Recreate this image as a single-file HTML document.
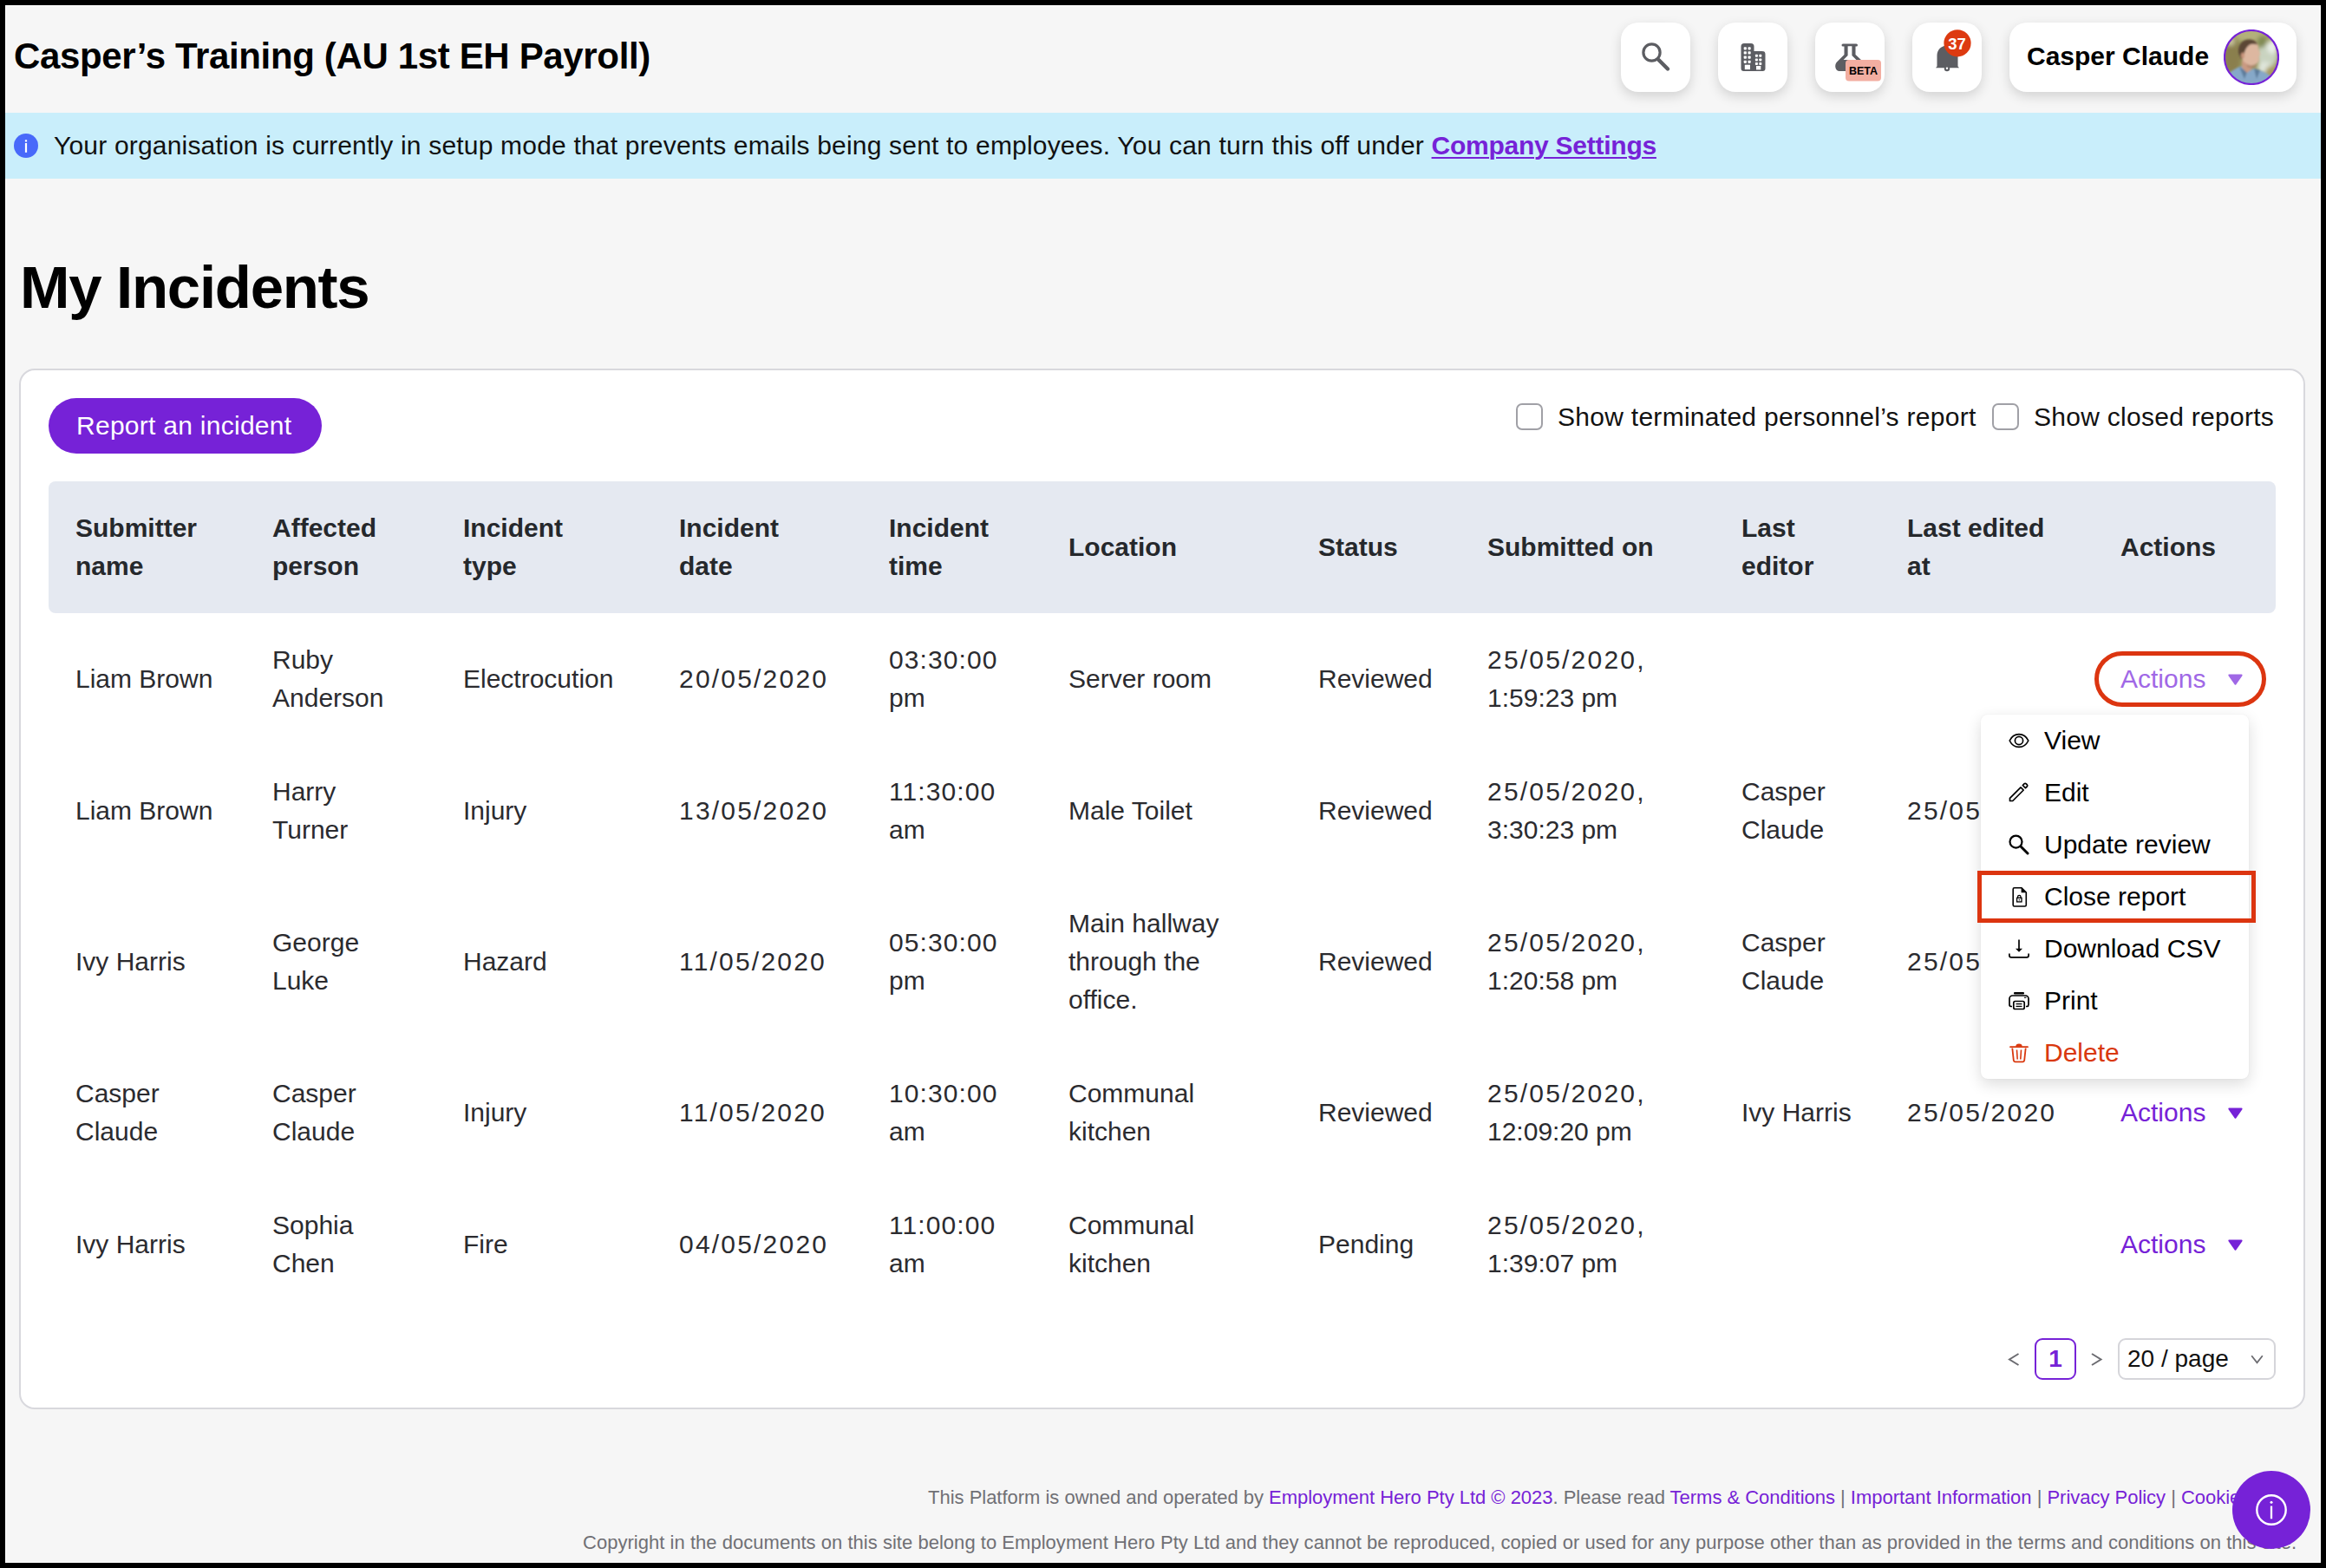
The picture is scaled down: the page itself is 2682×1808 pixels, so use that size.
<!DOCTYPE html>
<html><head><meta charset="utf-8">
<style>
*{box-sizing:border-box;margin:0;padding:0}
html,body{width:2682px;height:1808px;overflow:hidden;background:#000}
body{font-family:"Liberation Sans",sans-serif;position:relative}
#page{position:absolute;left:6px;top:6px;width:2670px;height:1796px;background:#f6f6f6;box-shadow:inset 0 0 0 1px #fff}
.abs{position:absolute;white-space:nowrap}
.hbtn{position:absolute;top:26px;width:80px;height:80px;background:#fff;border-radius:20px;box-shadow:0 5px 14px rgba(0,0,0,0.15)}
.hbtn svg{position:absolute;left:0;top:0}
#title{left:16px;top:44px;font-size:42px;line-height:42px;font-weight:bold;color:#000;letter-spacing:-0.35px}
#banner{position:absolute;left:6px;top:130px;width:2670px;height:76px;background:#c9eefb}
#h1{left:23px;top:297px;font-size:69px;line-height:69px;font-weight:bold;color:#000;letter-spacing:-1.3px}
#card{position:absolute;left:22px;top:425px;width:2636px;height:1200px;background:#fff;border:2px solid #d8d8dd;border-radius:18px}
#rbtn{position:absolute;left:56px;top:459px;width:315px;height:64px;border-radius:32px;background:#7622d7;color:#fff;font-size:30px;line-height:64px;padding-left:32px;letter-spacing:0.27px;white-space:nowrap}
.cb{position:absolute;top:465px;width:31px;height:31px;border:2px solid #a0a0a6;border-radius:7px;background:#fff}
.lbl{top:466px;font-size:30px;line-height:30px;color:#111;letter-spacing:0.28px}
#thead{position:absolute;left:56px;top:555px;width:2568px;height:152px;background:#e5e9f1;border-radius:8px}
table{position:absolute;left:56px;top:555px;border-collapse:collapse;table-layout:fixed;width:2567px}
td,th{padding:0 0 0 31px;vertical-align:middle;text-align:left;white-space:nowrap;font-size:30px;line-height:44px}
th{height:152px;font-weight:bold;color:#25282c}
td{color:#2b2b2f;padding-top:0}
tr.r{height:152px}
tr.r3{height:196px}
.n{letter-spacing:2.2px}
.t{letter-spacing:1.1px}
.act{color:#7622d7}
.act1{color:#a068e6}
.tri{display:inline-block;margin-left:25.5px;vertical-align:3px}
td.act,td.act1{padding-left:33px}

#menu{position:absolute;left:2284px;top:824px;width:309px;height:420px;background:#fff;border-radius:8px;box-shadow:0 6px 18px rgba(0,0,0,0.14),0 0 2px rgba(0,0,0,0.06)}
.mi{position:absolute;left:2284px;width:309px;height:60px;font-size:30px;line-height:60px;color:#000;white-space:nowrap}
.mi svg{position:absolute;left:32px;top:18px}
.mi span{position:absolute;left:73px;top:0}
#pill{position:absolute;left:2415px;top:751px;width:198px;height:64px;border:5px solid #dc3510;border-radius:32px}
#rect{position:absolute;left:2280px;top:1004px;width:321px;height:60px;border:5px solid #dc3510}
#pg1{position:absolute;left:2346px;top:1543px;width:48px;height:48px;border:2px solid #7622d7;border-radius:9px;color:#7622d7;font-weight:bold;font-size:28px;line-height:44px;text-align:center}
#sel{position:absolute;left:2442px;top:1543px;width:182px;height:48px;border:2px solid #d5d5da;border-radius:9px;background:#fff}
#sel span{position:absolute;left:9px;top:7px;font-size:28px;line-height:30px;color:#111;white-space:nowrap}
.foot{font-size:22px;line-height:22px;color:#707075}
.fl{color:#7622d7}
#fab{position:absolute;left:2574px;top:1696px;width:90px;height:90px;border-radius:45px;background:#7622d7}
</style></head>
<body>
<div id="page"></div>
<div class="abs" id="title">Casper’s Training (AU 1st EH Payroll)</div>

<div class="hbtn" style="left:1869px"><svg width="80" height="80" viewBox="0 0 80 80"><circle cx="35.5" cy="34.5" r="9.6" fill="none" stroke="#5c5d62" stroke-width="3.2"/><line x1="43.5" y1="43" x2="54" y2="53.5" stroke="#5c5d62" stroke-width="4.4" stroke-linecap="round"/></svg></div>
<div class="hbtn" style="left:1981px"><svg width="80" height="80" viewBox="0 0 80 80"><path d="M26.5 27.5a3.5 3.5 0 0 1 3.5-3.5h8a3.5 3.5 0 0 1 3.5 3.5V33h9.5a3.5 3.5 0 0 1 3.5 3.5V53a3 3 0 0 1-3 3H29.5a3 3 0 0 1-3-3z" fill="#5c5d62"/><g fill="#fff"><rect x="29.7" y="28.2" width="3.2" height="3.2" rx="0.8"/><rect x="29.7" y="33.3" width="3.2" height="3.2" rx="0.8"/><rect x="29.7" y="38.5" width="3.2" height="3.2" rx="0.8"/><rect x="29.7" y="43.7" width="3.2" height="3.2" rx="0.8"/><rect x="34.5" y="28.2" width="3.2" height="3.2" rx="0.8"/><rect x="34.5" y="33.3" width="3.2" height="3.2" rx="0.8"/><rect x="34.5" y="38.5" width="3.2" height="3.2" rx="0.8"/><rect x="34.5" y="43.7" width="3.2" height="3.2" rx="0.8"/><rect x="30.8" y="48.7" width="6.2" height="5.4"/><rect x="42.9" y="36.8" width="3" height="3" rx="0.7"/><rect x="42.9" y="41.5" width="3" height="3" rx="0.7"/><rect x="42.9" y="46.0" width="3" height="3" rx="0.7"/><rect x="47.3" y="36.8" width="3" height="3" rx="0.7"/><rect x="47.3" y="41.5" width="3" height="3" rx="0.7"/><rect x="47.3" y="46.0" width="3" height="3" rx="0.7"/><rect x="44" y="50" width="5.3" height="4.4"/></g></svg></div>
<div class="hbtn" style="left:2093px"><svg width="80" height="80" viewBox="0 0 80 80"><path d="M32 24.5h15.5a1.5 1.5 0 0 1 0 3H46.5v9.5l8 7.5c3 3 1.5 11.5-4 11.5H28c-4.5 0-6.5-6.5-3-10.5l8.5-8.5V27.5h-1.5a1.5 1.5 0 0 1 0-3z" fill="#5c5d62"/><path d="M37.6 27.3h4.8v10.8l5 4.8h-14.8l5-4.8z" fill="#fff"/><rect x="35" y="43" width="41" height="24.5" rx="4" fill="#f2aea1"/><text x="55.5" y="59.8" text-anchor="middle" font-family="Liberation Sans" font-weight="bold" font-size="12.5" fill="#000">BETA</text></svg></div>
<div class="hbtn" style="left:2205px"><svg width="80" height="80" viewBox="0 0 80 80"><path d="M40 26.5c-6.5 0-11.5 5-11.5 11.5v12.5l-1.5 1.8h27l-1.5-1.8V38c0-6.5-5-11.5-11.5-11.5z" fill="#5c5d62"/><circle cx="40" cy="53" r="3.2" fill="#5c5d62"/><circle cx="40" cy="52.8" r="1.2" fill="#fff"/><circle cx="52" cy="23.8" r="15.6" fill="#dd3a10"/><text x="51.5" y="31" text-anchor="middle" font-family="Liberation Sans" font-weight="bold" font-size="18.5" fill="#fff">37</text></svg></div>
<div class="hbtn" style="left:2317px;width:331px"><div class="abs" style="left:20px;top:24px;font-size:30px;line-height:30px;font-weight:bold;color:#000">Casper Claude</div>
<svg style="left:247px;top:8px" width="64" height="64" viewBox="0 0 64 64"><defs><clipPath id="av"><circle cx="32" cy="32" r="31"/></clipPath><filter id="bl" x="-30%" y="-30%" width="160%" height="160%"><feGaussianBlur stdDeviation="2.5"/></filter><filter id="bl2" x="-10%" y="-10%" width="120%" height="120%"><feGaussianBlur stdDeviation="0.8"/></filter></defs><g clip-path="url(#av)"><rect width="64" height="64" fill="#9a9a62"/><g filter="url(#bl)"><ellipse cx="10" cy="30" rx="10" ry="22" fill="#8a7f4e"/><ellipse cx="30" cy="6" rx="18" ry="8" fill="#b3b07a"/><ellipse cx="50" cy="30" rx="12" ry="14" fill="#c9d3c0"/><ellipse cx="56" cy="20" rx="6" ry="8" fill="#e8eee6"/><ellipse cx="47" cy="44" rx="8" ry="7" fill="#dfe6dc"/><ellipse cx="56" cy="50" rx="8" ry="8" fill="#a99b5e"/><ellipse cx="44" cy="14" rx="5" ry="7" fill="#7f8a52"/><ellipse cx="8" cy="14" rx="5" ry="5" fill="#c8c49c"/></g><g filter="url(#bl2)"><path d="M0 64V57c4-6 10-10 18-14l6-1 5 6 6-3 9 3c8 3 12 7 16 12v4z" fill="#86a8c8"/><path d="M18 43l6 14 3-8zM35 45l3 12 4-10z" fill="#5d7d9c"/><path d="M21 36h13l-2 10-5 4-6-6z" fill="#c99a82"/><path d="M20 25c0-9 5-13 11-13 6 0 9 4 9 9l1 4 1.5 4-2 1.5.5 3c0 4-3 7-8 8-6 0-12-5-13-11z" fill="#ddb7a0"/><path d="M17 27c-1-9 4-15.5 12-15.5 5 0 9 2 10 6-3-1-7-1-9 0-3 2-5 5-6 9l-1 6-3 2z" fill="#5b4636"/><ellipse cx="22" cy="30" rx="2" ry="3.6" fill="#c9957c"/><path d="M27 40c3 2 8 2 11-1l-1 4c-3 2-7 2-10 0z" fill="#a9826c" opacity="0.7"/></g></g><circle cx="32" cy="32" r="31" fill="none" stroke="#7622d7" stroke-width="2.2"/></svg></div>

<div id="banner"></div>
<svg class="abs" style="left:16px;top:154px" width="28" height="28" viewBox="0 0 28 28"><circle cx="14" cy="14" r="14" fill="#4869fa"/><rect x="12.9" y="11" width="2.2" height="10.8" fill="#fff"/><rect x="12.9" y="7.3" width="2.2" height="2.2" fill="#fff"/></svg>
<div class="abs" style="left:62px;top:153px;font-size:30px;line-height:30px;color:#111;letter-spacing:0.19px">Your organisation is currently in setup mode that prevents emails being sent to employees. You can turn this off under <b style="color:#7622d7;letter-spacing:-0.25px;text-decoration:underline;text-decoration-thickness:2px;text-underline-offset:3px">Company Settings</b></div>

<div class="abs" id="h1">My Incidents</div>

<div id="card"></div>
<div id="rbtn">Report an incident</div>
<div class="cb" style="left:1748px"></div>
<div class="abs lbl" style="left:1796px">Show terminated personnel’s report</div>
<div class="cb" style="left:2297px"></div>
<div class="abs lbl" style="left:2345px">Show closed reports</div>

<div id="thead"></div>
<table>
<colgroup><col style="width:227px"><col style="width:220px"><col style="width:249px"><col style="width:242px"><col style="width:207px"><col style="width:288px"><col style="width:195px"><col style="width:293px"><col style="width:191px"><col style="width:244px"><col style="width:211px"></colgroup>
<tr><th>Submitter<br>name</th><th>Affected<br>person</th><th>Incident<br>type</th><th>Incident<br>date</th><th>Incident<br>time</th><th>Location</th><th>Status</th><th>Submitted on</th><th>Last<br>editor</th><th>Last edited<br>at</th><th style="padding-left:33px">Actions</th></tr>
<tr class="r"><td>Liam Brown</td><td>Ruby<br>Anderson</td><td>Electrocution</td><td class="n">20/05/2020</td><td><span class="t">03:30:00</span><br>pm</td><td>Server room</td><td>Reviewed</td><td><span class="n">25/05/2020,</span><br>1:59:23 pm</td><td></td><td></td><td class="act1">Actions<svg class="tri" width="17" height="13" viewBox="0 0 17 13"><path d="M1.5 1.5h14l-7 10z" fill="currentColor" stroke="currentColor" stroke-width="2.2" stroke-linejoin="round"/></svg></td></tr>
<tr class="r"><td>Liam Brown</td><td>Harry<br>Turner</td><td>Injury</td><td class="n">13/05/2020</td><td><span class="t">11:30:00</span><br>am</td><td>Male Toilet</td><td>Reviewed</td><td><span class="n">25/05/2020,</span><br>3:30:23 pm</td><td>Casper<br>Claude</td><td class="n">25/05/2020</td><td class="act">Actions<svg class="tri" width="17" height="13" viewBox="0 0 17 13"><path d="M1.5 1.5h14l-7 10z" fill="currentColor" stroke="currentColor" stroke-width="2.2" stroke-linejoin="round"/></svg></td></tr>
<tr class="r3"><td>Ivy Harris</td><td>George<br>Luke</td><td>Hazard</td><td class="n">11/05/2020</td><td><span class="t">05:30:00</span><br>pm</td><td>Main hallway<br>through the<br>office.</td><td>Reviewed</td><td><span class="n">25/05/2020,</span><br>1:20:58 pm</td><td>Casper<br>Claude</td><td class="n">25/05/2020</td><td class="act">Actions<svg class="tri" width="17" height="13" viewBox="0 0 17 13"><path d="M1.5 1.5h14l-7 10z" fill="currentColor" stroke="currentColor" stroke-width="2.2" stroke-linejoin="round"/></svg></td></tr>
<tr class="r"><td>Casper<br>Claude</td><td>Casper<br>Claude</td><td>Injury</td><td class="n">11/05/2020</td><td><span class="t">10:30:00</span><br>am</td><td>Communal<br>kitchen</td><td>Reviewed</td><td><span class="n">25/05/2020,</span><br>12:09:20 pm</td><td>Ivy Harris</td><td class="n">25/05/2020</td><td class="act">Actions<svg class="tri" width="17" height="13" viewBox="0 0 17 13"><path d="M1.5 1.5h14l-7 10z" fill="currentColor" stroke="currentColor" stroke-width="2.2" stroke-linejoin="round"/></svg></td></tr>
<tr class="r"><td>Ivy Harris</td><td>Sophia<br>Chen</td><td>Fire</td><td class="n">04/05/2020</td><td><span class="t">11:00:00</span><br>am</td><td>Communal<br>kitchen</td><td>Pending</td><td><span class="n">25/05/2020,</span><br>1:39:07 pm</td><td></td><td></td><td class="act">Actions<svg class="tri" width="17" height="13" viewBox="0 0 17 13"><path d="M1.5 1.5h14l-7 10z" fill="currentColor" stroke="currentColor" stroke-width="2.2" stroke-linejoin="round"/></svg></td></tr>
</table>

<div id="menu"></div>
<div class="mi" style="top:824px"><svg width="24" height="24" viewBox="0 0 24 24"><path d="M1.2 12C3.5 7.2 7.5 4.6 12 4.6s8.5 2.6 10.8 7.4c-2.3 4.8-6.3 7.4-10.8 7.4S3.5 16.8 1.2 12z" fill="none" stroke="#000" stroke-width="1.7" stroke-linejoin="round"/><circle cx="12" cy="12" r="4.6" fill="none" stroke="#000" stroke-width="1.7"/></svg><span>View</span></div>
<div class="mi" style="top:884px"><svg width="24" height="24" viewBox="0 0 24 24"><path d="M1.5 21.5v-3.2L14 5.8l3.2 3.2L4.7 21.5z" fill="none" stroke="#000" stroke-width="1.7" stroke-linejoin="round"/><path d="M16.3 3.5l1.6-1.6a1.8 1.8 0 0 1 2.5 0l.7.7a1.8 1.8 0 0 1 0 2.5l-1.6 1.6z" fill="none" stroke="#000" stroke-width="1.7" stroke-linejoin="round"/></svg><span>Edit</span></div>
<div class="mi" style="top:944px"><svg width="24" height="24" viewBox="0 0 24 24"><circle cx="8.5" cy="8.6" r="7" fill="none" stroke="#000" stroke-width="2.2"/><line x1="14" y1="14" x2="22" y2="22" stroke="#000" stroke-width="3" stroke-linecap="round"/></svg><span>Update review</span></div>
<div class="mi" style="top:1004px"><svg width="24" height="24" viewBox="0 0 24 24"><path d="M5.2 3.2a1.5 1.5 0 0 1 1.5-1.5h8.3l5.3 5.3v14.5a1.5 1.5 0 0 1-1.5 1.5H6.7a1.5 1.5 0 0 1-1.5-1.5z" fill="none" stroke="#000" stroke-width="1.6"/><path d="M14.6 1.7v5.5h5.6z" fill="#000"/><rect x="9.6" y="13.3" width="5.4" height="4.6" fill="none" stroke="#000" stroke-width="1.3"/><path d="M10.6 13.3v-1.3a1.7 1.7 0 0 1 3.4 0v1.3" fill="none" stroke="#000" stroke-width="1.3"/><rect x="11.7" y="15" width="1.2" height="1.3" fill="#000"/></svg><span>Close report</span></div>
<div class="mi" style="top:1064px"><svg width="24" height="24" viewBox="0 0 24 24"><line x1="12" y1="1.5" x2="12" y2="14" stroke="#000" stroke-width="1.7"/><path d="M8 11.8h8l-4 4z" fill="#000"/><path d="M0.9 17.5v2.3a2 2 0 0 0 2 2h18.2a2 2 0 0 0 2-2v-2.3" fill="none" stroke="#000" stroke-width="1.7"/></svg><span>Download CSV</span></div>
<div class="mi" style="top:1124px"><svg width="24" height="24" viewBox="0 0 24 24"><rect x="6" y="2" width="12" height="2.6" rx="1" fill="#000"/><path d="M4 18.5H2.8A2 2 0 0 1 1 16.5v-7a3.5 3.5 0 0 1 3.5-3.5h15a3.5 3.5 0 0 1 3.5 3.5v7a2 2 0 0 1-1.8 2H20" fill="none" stroke="#000" stroke-width="1.7"/><rect x="5.8" y="12.5" width="12.4" height="9" rx="1.8" fill="#fff" stroke="#000" stroke-width="1.7"/><line x1="8.5" y1="15.6" x2="15.5" y2="15.6" stroke="#000" stroke-width="1.3"/><line x1="8.5" y1="18.4" x2="15.5" y2="18.4" stroke="#000" stroke-width="1.3"/><line x1="18" y1="8.3" x2="20.5" y2="8.3" stroke="#000" stroke-width="1.1"/></svg><span>Print</span></div>
<div class="mi" style="top:1184px;color:#d9380e"><svg width="24" height="24" viewBox="0 0 24 24"><path d="M2 5.2h20" stroke="#d9380e" stroke-width="1.8" stroke-linecap="round"/><path d="M9 4.8c0-1.6 1.2-2.6 3-2.6s3 1 3 2.6" fill="#d9380e" stroke="#d9380e" stroke-width="1.4"/><path d="M4.3 6.5l1.5 14.2a1.8 1.8 0 0 0 1.8 1.6h8.8a1.8 1.8 0 0 0 1.8-1.6l1.5-14.2" fill="none" stroke="#d9380e" stroke-width="1.8"/><line x1="9.5" y1="8.5" x2="10.2" y2="19.5" stroke="#d9380e" stroke-width="1.6"/><line x1="14.5" y1="8.5" x2="13.8" y2="19.5" stroke="#d9380e" stroke-width="1.6"/></svg><span>Delete</span></div>

<div id="pill"></div>
<div id="rect"></div>

<svg class="abs" style="left:2314px;top:1559px" width="16" height="17" viewBox="0 0 16 17"><path d="M13.5 2L3 8.5 13.5 15" fill="none" stroke="#6b6b70" stroke-width="2"/></svg>
<div id="pg1">1</div>
<svg class="abs" style="left:2410px;top:1559px" width="16" height="17" viewBox="0 0 16 17"><path d="M2 2l10.5 6.5L2 15" fill="none" stroke="#6b6b70" stroke-width="2"/></svg>
<div id="sel"><span>20 / page</span><svg style="position:absolute;left:151px;top:17px" width="15" height="11" viewBox="0 0 15 11"><path d="M1.2 1.2l6.3 8 6.3-8" fill="none" stroke="#6b6b70" stroke-width="1.8"/></svg></div>

<div class="abs foot" style="right:34px;top:1716px;letter-spacing:-0.02px">This Platform is owned and operated by <span class="fl">Employment Hero Pty Ltd © 2023</span>. Please read <span class="fl">Terms &amp; Conditions</span> | <span class="fl">Important Information</span> | <span class="fl">Privacy Policy</span> | <span class="fl">Cookie Policy</span></div>
<div class="abs foot" style="left:672px;top:1768px;letter-spacing:0.03px">Copyright in the documents on this site belong to Employment Hero Pty Ltd and they cannot be reproduced, copied or used for any purpose other than as provided in the terms and conditions on this site.</div>

<div id="fab"><svg width="90" height="90" viewBox="0 0 90 90"><circle cx="45" cy="45" r="16.7" fill="none" stroke="#fff" stroke-width="2.4"/><rect x="43.85" y="40.5" width="2.3" height="14.8" fill="#fff"/><circle cx="45" cy="36.2" r="1.5" fill="#fff"/></svg></div>

</body></html>
